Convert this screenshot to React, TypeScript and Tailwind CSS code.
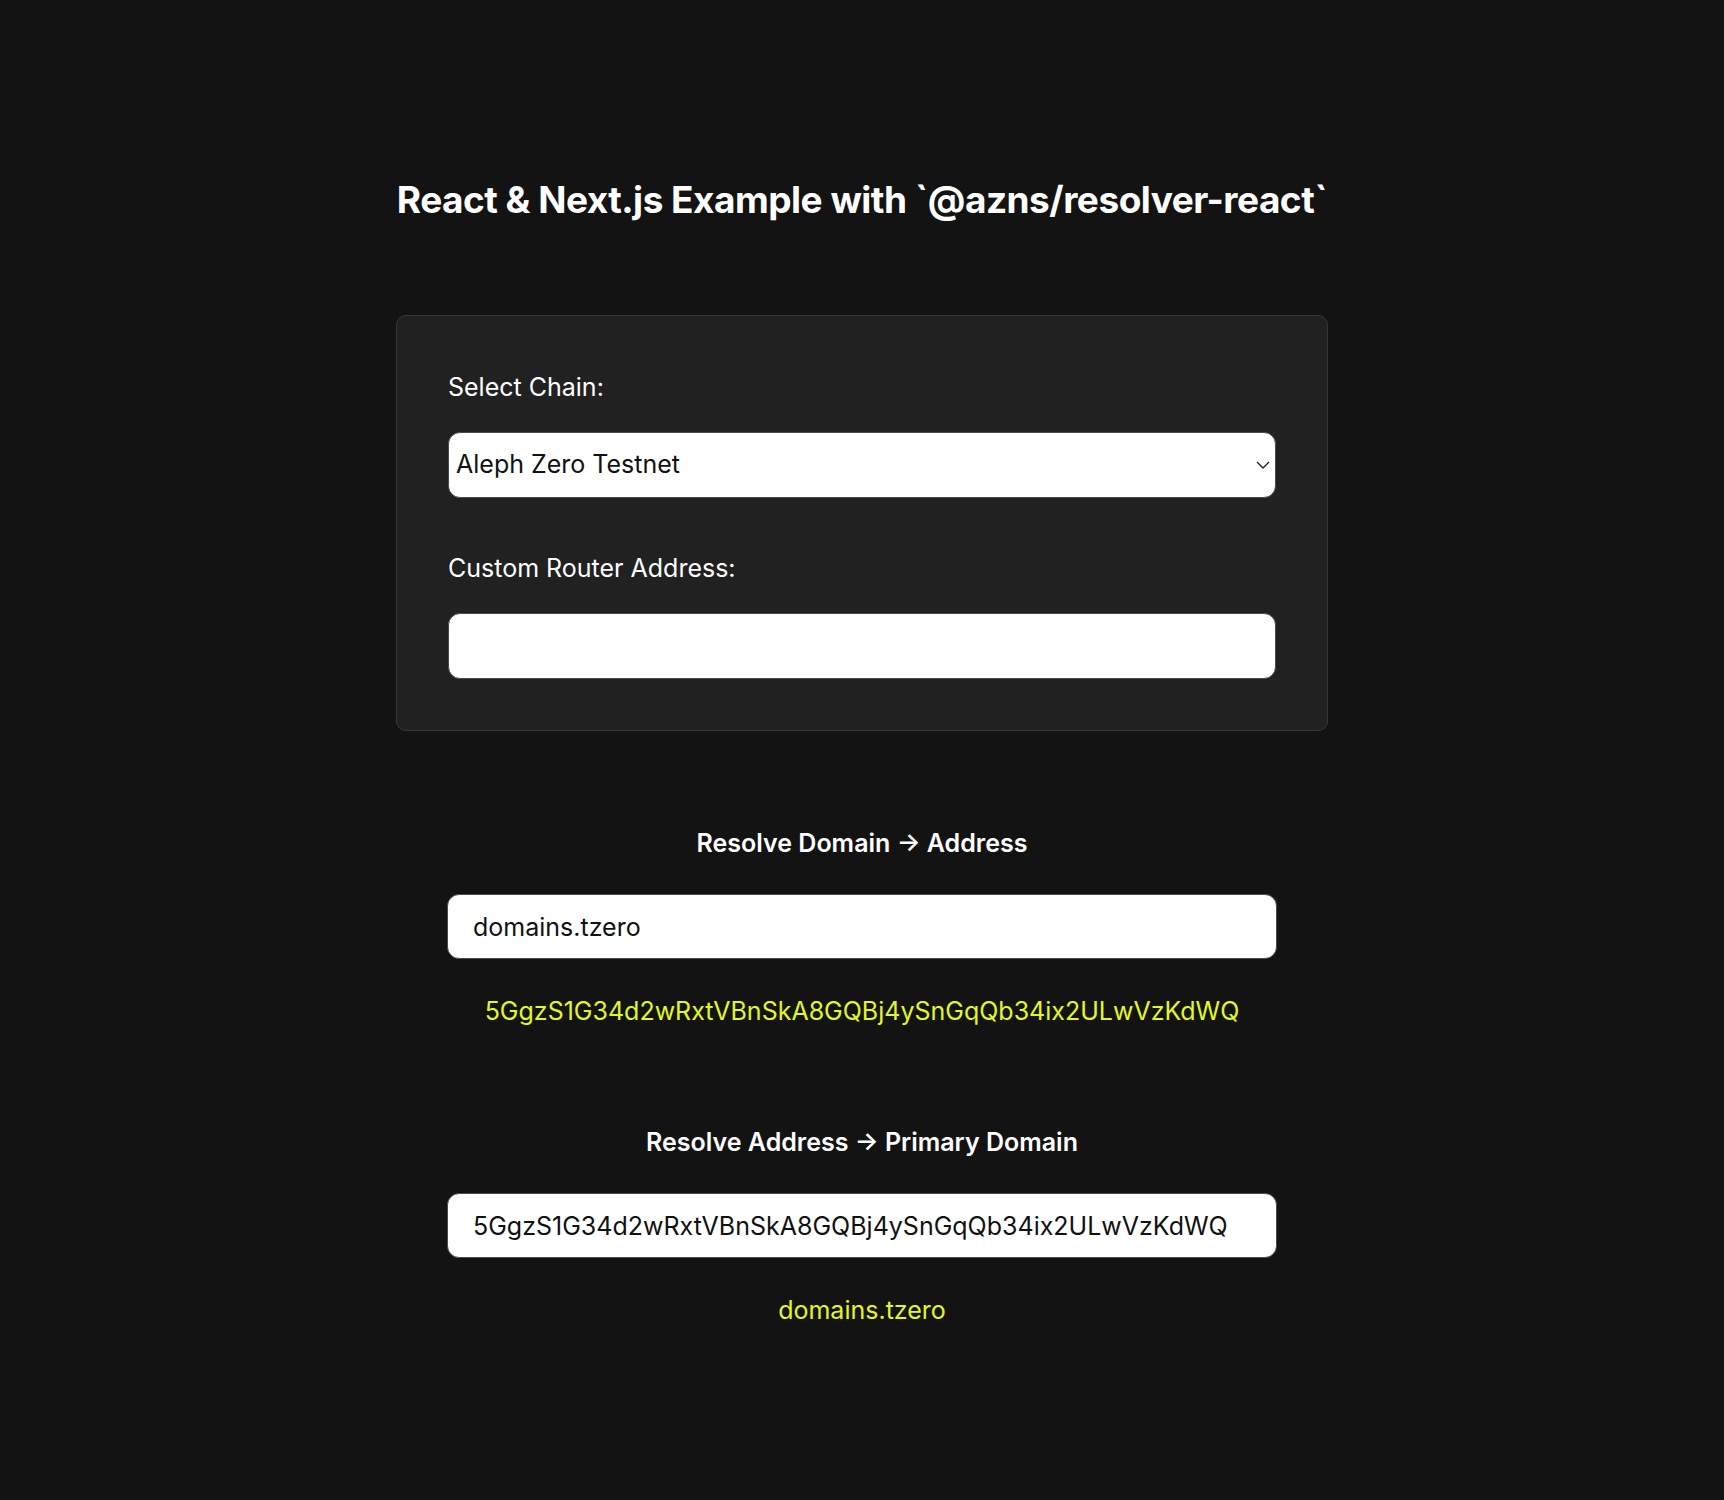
import React from "react";

const ADDRESS = "5GgzS1G34d2wRxtVBnSkA8GQBj4ySnGqQb34ix2ULwVzKdWQ";

function Section({ title, value, result }: { title: string; value: string; result: string }) {
  return (
    <div className="flex flex-col items-center w-full">
      <h2 className="text-[25px] leading-[30px] font-semibold text-white">{title}</h2>
      <input
        readOnly
        value={value}
        className="mt-[36px] w-[830px] h-[65px] rounded-[12px] bg-white border border-[#4a4a4a] px-[25px] text-[25px] text-[#111] outline-none"
        style={{ fontFamily: "Inter, 'Noto Sans', sans-serif" }}
      />
      <div className="mt-[37px] text-[25px] leading-[30px] text-[#e3f823]">{result}</div>
    </div>
  );
}

export default function App() {
  return (
    <div
      className="min-h-[1500px] w-full bg-[#131313] flex flex-col items-center pt-[177px] text-white"
      style={{ fontFamily: "Inter, 'Noto Sans', sans-serif" }}
    >
      <h1 className="text-[37px] leading-[46px] font-bold tracking-[-0.5px] text-white">
        React &amp; Next.js Example with `@azns/resolver-react`
      </h1>

      <div className="mt-[92px] w-[932px] rounded-[10px] border border-[#383838] bg-[#212121] pt-[56px] px-[51px] pb-[51px] flex flex-col">
        <label className="block text-[25px] leading-[30px] text-white">Select Chain:</label>
        <div className="relative mt-[30px]">
          <select
            className="appearance-none w-full h-[66px] rounded-[12px] bg-white border border-[#4a4a4a] pl-[7px] pr-[40px] text-[25px] text-[#111] outline-none"
            defaultValue="testnet"
            style={{ fontFamily: "Inter, 'Noto Sans', sans-serif" }}
          >
            <option value="testnet">Aleph Zero Testnet</option>
            <option value="mainnet">Aleph Zero</option>
          </select>
          <svg
            className="pointer-events-none absolute right-[6px] top-[29px]"
            width="14"
            height="8"
            viewBox="0 0 14 8"
            fill="none"
          >
            <path d="M1 1l6 6 6-6" stroke="#222" strokeWidth="1.4" />
          </svg>
        </div>

        <label className="block mt-[55px] text-[25px] leading-[30px] text-white">Custom Router Address:</label>
        <input
          readOnly
          className="mt-[30px] w-full h-[66px] rounded-[12px] bg-white border border-[#4a4a4a] px-[8px] text-[25px] text-[#111] outline-none"
        />
      </div>

      <div className="mt-[97px] w-full">
        <Section title="Resolve Domain → Address" value="domains.tzero" result={ADDRESS} />
      </div>
      <div className="mt-[101px] w-full">
        <Section title="Resolve Address → Primary Domain" value={ADDRESS} result="domains.tzero" />
      </div>
    </div>
  );
}
